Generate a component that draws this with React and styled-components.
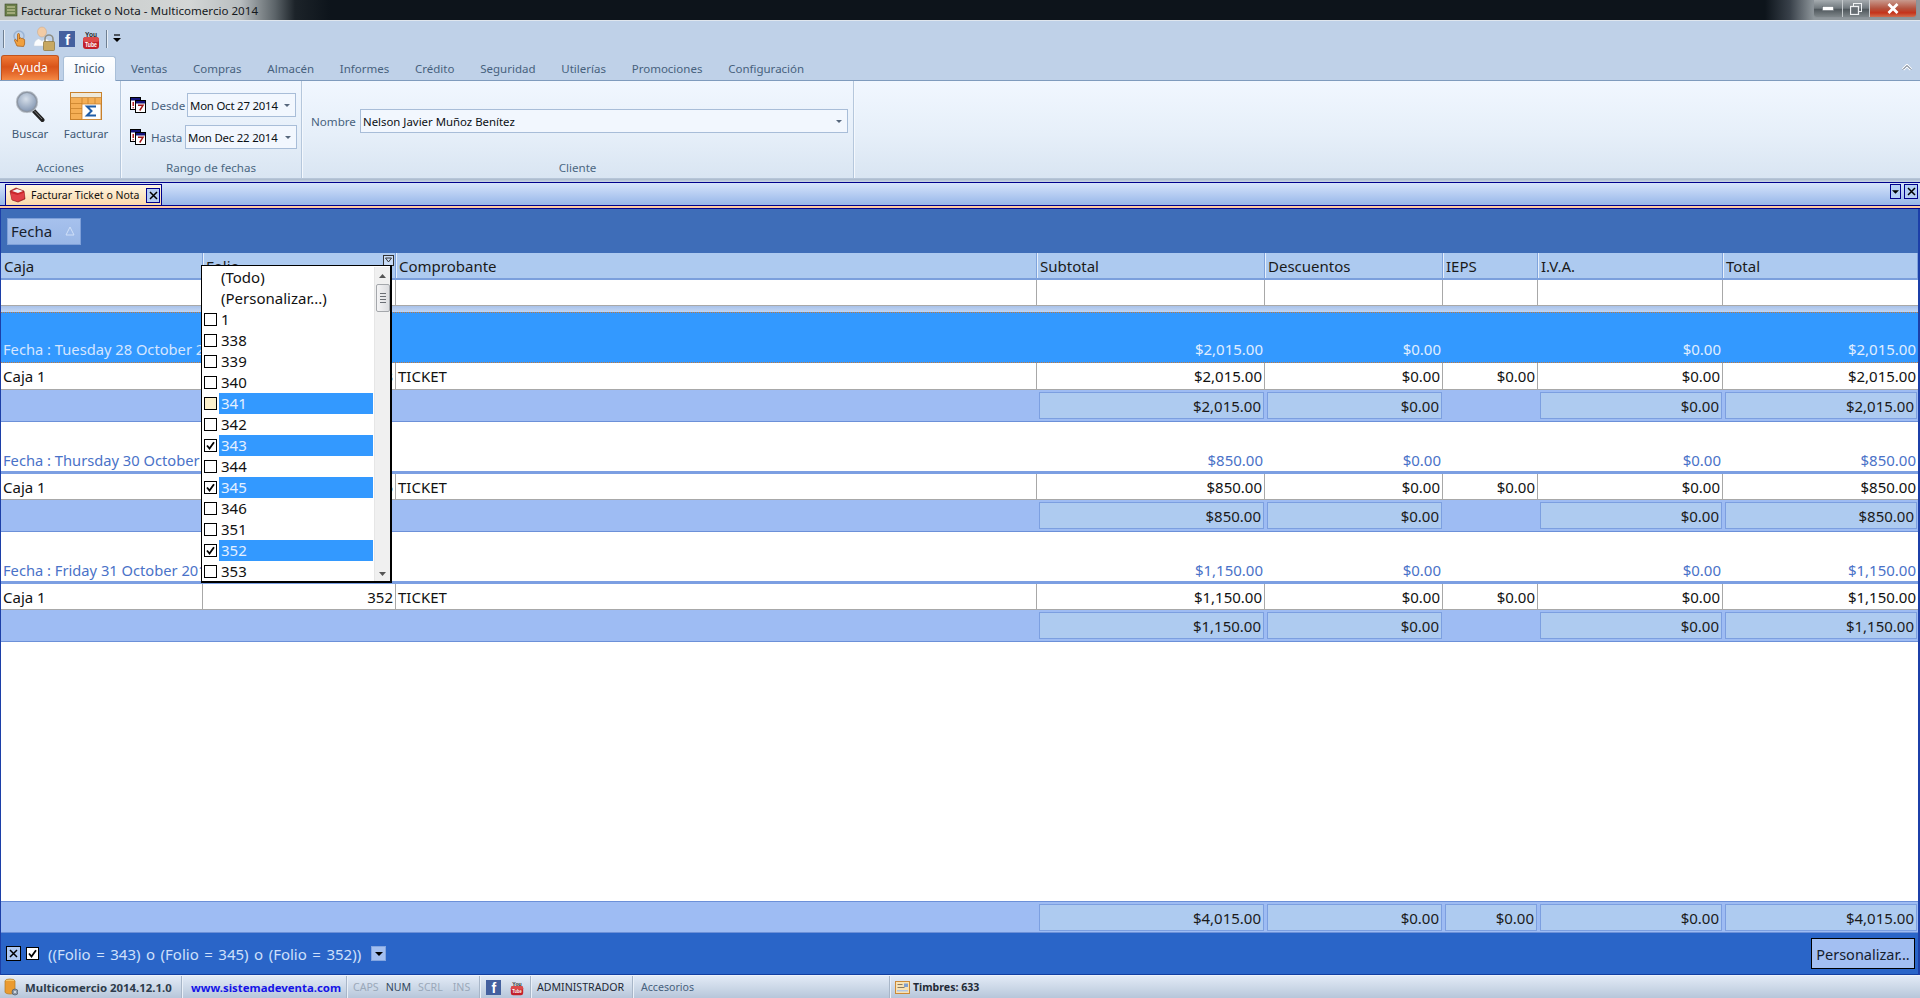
import React from "react";
import styled, { createGlobalStyle } from "styled-components";

const Global = createGlobalStyle`
  html, body { margin: 0; padding: 0; background: #fff; }
  * { box-sizing: border-box; }
  #root { width: 1920px; height: 998px; overflow: hidden; }
`;

const COLS = "202px 193px 641px 228px 178px 95px 185px 195px";
const UI = `"Noto Sans", "Open Sans", sans-serif`;

const Page = styled.div`
  width: 1920px; height: 998px; display: flex; flex-direction: column;
  font-family: ${UI}; overflow: hidden;
`;

/* ---------- title bar ---------- */
const TitleBar = styled.div`
  height: 21px; flex: none; display: flex; align-items: flex-start;
  border-bottom: 1px solid #dfe6ee;
  background: linear-gradient(90deg, #c3c7c6 0, #d3d6d6 190px, #b9bec0 240px, #5c6469 275px, #1c2329 295px, #0d141b 330px, #0d141b 1765px, #39414a 1790px, #8f979c 1814px);
`;
const TitleIcon = styled.svg` width: 14px; height: 16px; margin: 2px 3px 0 4px; flex: none; `;
const TitleText = styled.div`
  font-size: 11.6px; line-height: 21px; color: #15191d; white-space: nowrap;
`;
const WinButtons = styled.div`
  margin-left: auto; margin-right: 3px; height: 18px; display: flex;
  border: 1px solid #8b9298; border-top: none; border-radius: 0 0 4px 4px; overflow: hidden;
`;
const WinBtn = styled.div`
  width: ${p => p.$w}px; height: 100%; display: flex; align-items: center; justify-content: center;
  border-left: ${p => (p.$first ? "none" : "1px solid #c5cacd")};
  background: ${p => (p.$red
    ? "linear-gradient(#c89a8e, #b4533f 50%, #c5331a 75%, #cf6e4e)"
    : "linear-gradient(#a6acb0, #71797e 48%, #50585d 55%, #7f878b)")};
`;

/* ---------- ribbon ---------- */
const RibbonTop = styled.div`
  height: 60px; flex: none; background: #bfd1e8; display: flex; flex-direction: column;
  border-bottom: 1px solid #7f9bbd;
`;
const Qat = styled.div`
  height: 34px; flex: none; display: flex; align-items: center; padding: 1px 0 0 3px;
`;
const QatSep = styled.div`
  width: 1px; height: 18px; background: #6f7f92; border-right: 1px solid #e8eef6; box-sizing: content-box;
  margin: ${p => p.$m};
`;
const QatSlot = styled.div` flex: none; margin-left: ${p => p.$ml}px; display: flex; `;
const Tabs = styled.div`
  height: 25px; display: flex; align-items: flex-end; position: relative;
`;
const AyudaTab = styled.div`
  width: 58px; height: 25px; margin-left: 1px; border-radius: 3px 3px 0 0; color: #fff;
  font-size: 12px; display: flex; align-items: center; justify-content: center; padding-bottom: 1px;
  background: linear-gradient(#f07a36, #d9541a 45%, #e4682a 70%, #f58a45);
  border: 1px solid #c0541e; border-bottom: none;
`;
const ActiveTab = styled.div`
  width: 53px; height: 25px; margin: 0 2px -1px 4px; border-radius: 3px 3px 0 0; color: #3d5670;
  font-size: 12px; display: flex; align-items: center; justify-content: center; padding-bottom: 1px;
  background: linear-gradient(#fff, #f0f6fe); border: 1px solid #a9bfd8; border-bottom: none; z-index: 1;
`;
const Tab = styled.div`
  padding: 2px 12.9px 0; height: 25px; display: flex; align-items: center; color: #47617d;
  font-size: 11.5px; white-space: nowrap;
`;
const Collapse = styled.svg` position: absolute; right: 8px; top: 9px; `;

const RibbonBody = styled.div`
  height: 98px; flex: none; display: flex;
  background: linear-gradient(#f1f7ff, #e6eff9 55%, #d9e5f2);
  border-bottom: 1px solid #b6c5d8;
`;
const Group = styled.div`
  width: ${p => p.$w}px; flex: none; display: flex; flex-direction: column;
  border-right: 1px solid #b5c7dc; box-shadow: 1px 0 0 #f4f8fd;
`;
const GroupBody = styled.div`
  flex: 1; min-height: 0; position: relative; padding: ${p => p.$p || 0};
  display: ${p => p.$flex ? "flex" : "block"};
`;
const GroupLabel = styled.div`
  height: 21px; flex: none; font-size: 11.6px; color: #4b6782; text-align: center; line-height: 21px;
`;
const BigAction = styled.div`
  width: ${p => p.$w}px; display: flex; flex-direction: column; align-items: center; color: #3f5974;
  font-size: 11.4px; line-height: 14px;
`;
const BigIconSlot = styled.div`
  height: 36px; width: 100%; display: flex; align-items: flex-end; justify-content: center; margin-bottom: 5px;
  padding-bottom: ${p => p.$pb || 0}px;
`;
const DateRow = styled.div`
  display: flex; align-items: center; height: 24px; margin-bottom: 8px;
`;
const DateLabel = styled.div`
  font-size: 11.6px; color: #47617d; margin: 0 3px 0 5px; white-space: nowrap; width: ${p => p.$w}px;
`;
const Combo = styled.div`
  width: ${p => p.$w}px; height: 24px; flex: none; border: 1px solid #a8bdd8; background: #f2f7fe;
  display: flex; align-items: center; padding: 0 0 0 2px; font-size: 11.4px; color: #0b1014; white-space: nowrap;
  letter-spacing: ${p => p.$ls || 0}px;
`;
const ComboArrow = styled.span`
  margin-left: auto; margin-right: 5px; width: 0; height: 0;
  border-left: 3px solid transparent; border-right: 3px solid transparent; border-top: 3px solid #56677c;
`;
const NameRow = styled.div`
  display: flex; align-items: center; height: 24px; margin-left: 9px; margin-top: 28px;
`;
const NameLabel = styled.div`
  font-size: 11.6px; color: #47617d; width: 49px; white-space: nowrap;
`;
const RibbonShade = styled.div`
  height: 3px; flex: none; background: linear-gradient(#a9b8ca, #c9d6e6);
`;

/* ---------- MDI tab strip ---------- */
const MdiStrip = styled.div`
  height: 27px; flex: none; display: flex; align-items: flex-end; position: relative;
  border-top: 1px solid #00008b; border-bottom: 1px solid #00008b;
  background: linear-gradient(#fcc9a0, #fcc9a0) bottom / 100% 2px no-repeat,
              linear-gradient(#00008b, #00008b) 0 calc(100% - 2px) / 100% 1px no-repeat,
              linear-gradient(#d6e4fb, #8eb0e6);
  padding: 0 0 3px 5px;
`;
const MdiTab = styled.div`
  width: 157px; height: 21px; display: flex; align-items: center;
  border: 1px solid #00008b; border-bottom: none;
  background: linear-gradient(#fff6e2, #fbd9ab);
  font-size: 10.5px; color: #111; padding-left: 3px; white-space: nowrap;
`;
const MdiTabIconSlot = styled.div` flex: none; margin-right: 5px; display: flex; `;
const MdiBtn = styled.div`
  width: ${p => p.$w || 14}px; height: 15px; border: 1px solid #00008b; background: ${p => p.$bg || "#b6cdf2"};
  display: flex; align-items: center; justify-content: center; flex: none;
  margin-left: ${p => p.$push ? "auto" : 0}; margin-right: ${p => p.$push ? "1px" : 0};
`;
const MdiRight = styled.div`
  margin-left: auto; display: flex; gap: 3px; padding: 0 2px 6px 0;
`;

/* ---------- grid ---------- */
const GridArea = styled.div`
  flex: 1; min-height: 0; display: flex; flex-direction: column; position: relative;
  border-left: 1px solid #1c3fa8; border-right: 2px solid #1c3fa8; font-size: 15px; color: #1a1a1a;
`;
const GroupBand = styled.div`
  height: 44px; flex: none; background: #3e6db8; display: flex; align-items: center; padding-left: 6px;
`;
const BandButton = styled.div`
  width: 74px; height: 27px; background: linear-gradient(#a6c1ed, #9ab7e6); border: 1px solid #7fa0d8;
  display: flex; align-items: center; padding-left: 3px; font-size: 15px; color: #17212e; position: relative;
`;
const BandSort = styled.svg` position: absolute; right: 5px; top: 7px; `;
const Row = styled.div`
  display: grid; grid-template-columns: ${COLS}; flex: none; height: ${p => p.$h}px;
`;
const HeaderRow = styled(Row)`
  background: #adcaf0; border-bottom: 2px solid #7b9fdc;
`;
const HeaderCell = styled.div`
  padding: 2px 0 0 3px; line-height: 22px; position: relative; white-space: nowrap;
  border-right: 1px solid #7fa3dc; box-shadow: inset 1px 0 0 #e6effb;
  &:first-child { box-shadow: none; }
`;
const HeadFilter = styled.svg` position: absolute; right: 1px; top: 2px; `;
const Cell = styled.div`
  border-right: 1px solid #a8a8a8; padding: 1px 2px 0; line-height: 24px; white-space: nowrap; overflow: hidden;
  text-align: ${p => p.$right ? "right" : "left"};
  color: #111;
  &:last-child { border-right: none; }
`;
const WhiteRow = styled(Row)` background: #fff; border-bottom: 1px solid #a8a8a8; `;
const Spacer = styled.div` height: 6px; flex: none; background: linear-gradient(#a8c2ea, #c3d6f2); `;
const GroupHead = styled(Row)`
  align-items: end; background: ${p => p.$active ? "#3399ff" : "#fff"};
  border-top: ${p => p.$active ? "1px dotted #c2783c" : "none"};
  border-bottom: ${p => p.$active ? "1px dotted #c2783c" : "3px solid #7c9fe2"};
  padding-bottom: ${p => p.$active ? 2 : 0}px;
  color: ${p => p.$active ? "#d6e6ff" : "#4a72c8"};
`;
const GroupTitle = styled.div`
  grid-column: 1 / 4; padding-left: 2px; line-height: 22px; white-space: nowrap; font-size: 14.7px;
`;
const GroupAmount = styled.div`
  text-align: right; padding-right: 2px; line-height: 22px;
  color: ${p => p.$active ? "#e0eeff" : "#4a72c8"};
`;
const FootRow = styled(Row)`
  background: #9ebcf3; border-bottom: 1px solid #6c90d8; border-top: 1px solid #a8a8a8; align-items: center;
`;
const FootBox = styled.div`
  height: 27px; background: #aecbf0; border: 1px solid #7c9fe0; margin: 0 1px 0 2px;
  text-align: right; padding: 1px 2px 0 0; line-height: 24px; color: #1a1a1a;
`;
const FootBlank = styled.div``;
const Empty = styled.div` flex: 1; background: #fff; `;
const Summary = styled(Row)`
  background: #9ebcf3; border-top: 1px solid #6c90d8; border-bottom: 1px solid #6c90d8; align-items: center;
`;

/* filter dropdown */
const Dropdown = styled.div`
  position: absolute; left: 200px; top: 56px; width: 191px; height: 318px;
  background: #fff; border: 1px solid #000; border-right-width: 2px; border-bottom-width: 2px;
  display: grid; grid-template-columns: 1fr 16px; overflow: hidden; z-index: 3; padding-top: 1px;
`;
const DropList = styled.div` display: flex; flex-direction: column; `;
const DropItem = styled.div`
  height: 21px; flex: none; display: flex; align-items: center; padding-left: 2px;
`;
const Check = styled.div`
  width: 13px; height: 13px; flex: none; border: 1px solid #000; margin-right: 2px;
  background: ${p => p.$hover ? "#fdf1cc" : "#fff"};
  display: flex; align-items: center; justify-content: center;
`;
const CheckGap = styled.div` width: 15px; flex: none; `;
const DropLabel = styled.div`
  flex: 1; margin-right: 1px; height: 21px; line-height: 20px; padding-left: 2px; font-size: 15px;
  background: ${p => p.$on ? "#3399ff" : "transparent"}; color: ${p => p.$on ? "#e4f0ff" : "#111"};
`;
const ScrollBar = styled.div`
  background: #f0f0f0; display: flex; flex-direction: column; align-items: center; position: relative;
  border-left: 1px solid #e6e6e6;
`;
const ScrollArrow = styled.div`
  height: 17px; display: flex; align-items: center; justify-content: center; flex: none;
  margin-top: ${p => p.$end ? "auto" : 0};
`;
const ScrollThumb = styled.div`
  width: 14px; height: 28px; flex: none; border: 1px solid #a4a7ab; border-radius: 2px;
  background: linear-gradient(90deg, #f4f4f5, #dcdde0); display: flex; flex-direction: column;
  align-items: center; justify-content: center; gap: 2px;
`;
const Grip = styled.div` width: 6px; height: 1px; background: #6a6e74; `;

/* filter bar */
const FilterBar = styled.div`
  height: 42px; flex: none; background: #2a65c8; display: flex; align-items: center; padding: 0 3px 0 5px;
  border-bottom: 1px solid #123fa0;
`;
const FilterClose = styled.div`
  width: 15px; height: 15px; background: #afc9f2; border: 1px solid #000; flex: none;
  display: flex; align-items: center; justify-content: center; margin-right: 5px;
`;
const FilterCheck = styled.div`
  width: 13px; height: 13px; background: #fff; border: 1px solid #000; flex: none;
  display: flex; align-items: center; justify-content: center; margin-right: 9px;
`;
const FilterText = styled.div`
  color: #cfe0fb; font-size: 15px; white-space: nowrap; width: 323px; word-spacing: 1.6px;
`;
const FilterDrop = styled.div`
  width: 15px; height: 15px; background: #a3bff0; border: 1px solid #83a5e0; flex: none;
  display: flex; align-items: center; justify-content: center;
`;
const CustomButton = styled.div`
  margin-left: auto; width: 104px; height: 31px; background: #a3bff2; border: 1px solid #000;
  font-size: 14.5px; color: #14202e; display: flex; align-items: center; justify-content: center; white-space: nowrap;
`;

/* status bar */
const StatusBar = styled.div`
  height: 23px; flex: none; display: flex; align-items: center;
  background: linear-gradient(#e2eaf6, #cdd9e8 50%, #b7c6da); border-top: 1px solid #eef3fa;
  font-size: 10.6px; color: #1f2a36; white-space: nowrap;
`;
const StatusItem = styled.div`
  height: 100%; display: flex; align-items: center; width: ${p => p.$w}px; flex: none; padding-left: ${p => p.$pl || 0}px;
  border-right: ${p => p.$nosep ? "none" : "1px solid #a8b6c8"}; box-shadow: ${p => p.$nosep ? "none" : "1px 0 0 #eaf0f8"};
  font-weight: ${p => p.$bold ? 700 : 400}; color: ${p => p.$color || "inherit"}; gap: ${p => p.$gap || 0}px;
  font-size: ${p => p.$fs || 10.6}px;
`;
const Key = styled.span` color: ${p => p.$on ? "#34495e" : "#9aa8b9"}; margin-right: ${p => p.$mr}px; `;

/* ---------- icons ---------- */
const Cross = ({ s = 9, w = 1.5, c = "#000" }) => (
  <svg width={s} height={s} viewBox="0 0 9 9"><path d="M1 1l7 7M8 1L1 8" stroke={c} strokeWidth={w} fill="none" /></svg>
);
const Tick = ({ s = 9 }) => (
  <svg width={s} height={s} viewBox="0 0 9 9"><path d="M1 4.500l2.500 3L8 1.200" stroke="#000" strokeWidth="1.800" fill="none" /></svg>
);
const DownTri = ({ w = 8, h = 4 }) => (
  <svg width={w} height={h} viewBox="0 0 8 4"><path d="M0 0h8L4 4z" fill="#000" /></svg>
);
const FacebookIcon = ({ w = 16, h = 16 }) => (
  <svg width={w} height={h} viewBox="0 0 16 16">
    <rect width="16" height="16" fill="#44609f" />
    <text x="8.400" y="14" fontFamily="Liberation Sans, sans-serif" fontWeight="700" fontSize="15" fill="#fff" textAnchor="middle">f</text>
  </svg>
);
const YoutubeIcon = ({ w = 18, h = 22 }) => (
  <svg width={w} height={h} viewBox="0 0 18 22">
    <text x="9" y="8.500" fontFamily="Liberation Sans, sans-serif" fontWeight="700" fontSize="8" fill="#2c2c2c" textAnchor="middle" textLength="12" lengthAdjust="spacingAndGlyphs">You</text>
    <rect x="1" y="9" width="16" height="12" rx="3" fill="#c3202a" />
    <rect x="1" y="9" width="16" height="5" rx="2.500" fill="#dc4a4a" />
    <text x="9" y="18.500" fontFamily="Liberation Sans, sans-serif" fontWeight="700" fontSize="8" fill="#fff" textAnchor="middle" textLength="12" lengthAdjust="spacingAndGlyphs">Tube</text>
  </svg>
);
const HandIcon = () => (
  <svg width="14" height="18" viewBox="0 0 14 18">
    <circle cx="6" cy="6" r="5" fill="none" stroke="#9ab3d4" strokeWidth="1.500" />
    <path d="M4 16L1.500 10.500c-.4-1 .9-1.500 1.600-.6L4.500 11.500V4.500c0-1.300 2-1.300 2 0V9l.3-1c.8-.5 1.500-.2 1.700.500.7-.5 1.500-.2 1.600.6.8-.3 1.500.1 1.500 1V14l-1 2.500z" fill="#f0a040" stroke="#a85a10" strokeWidth=".7" />
  </svg>
);
const UserLockIcon = () => (
  <svg width="23" height="26" viewBox="0 0 23 26">
    <ellipse cx="9" cy="6" rx="4.500" ry="5" fill="#f2cba5" stroke="#c9a583" strokeWidth=".5" />
    <path d="M1 20c0-5 3-7 5-7l3 2 3-2c3 0 4 2 5 4l-3 3z" fill="#fbfcfe" stroke="#cfd6de" strokeWidth=".5" />
    <path d="M12 16v-3a4 4 0 0 1 8 0v3" fill="none" stroke="#8f8f86" strokeWidth="1.600" />
    <rect x="10.500" y="15.500" width="11" height="9" rx="1" fill="#c8a860" stroke="#8b7238" strokeWidth=".7" />
  </svg>
);
const Magnifier = () => (
  <svg width="32" height="32" viewBox="0 0 32 32">
    <defs>
      <radialGradient id="gl" cx="45%" cy="35%" r="70%"><stop offset="0" stopColor="#d6dfea" /><stop offset="1" stopColor="#7c90ad" /></radialGradient>
    </defs>
    <path d="M19 20l9.500 10" stroke="#222" strokeWidth="4" strokeLinecap="round" />
    <path d="M20 20.500l8 8.500" stroke="#777" strokeWidth="1" />
    <circle cx="13" cy="12" r="10" fill="url(#gl)" stroke="#8d96a3" strokeWidth="2" />
    <circle cx="13" cy="12" r="10.800" fill="none" stroke="#d8dde3" strokeWidth=".6" />
  </svg>
);
const SumTable = () => (
  <svg width="32" height="28" viewBox="0 0 32 28">
    <rect x=".5" y=".5" width="31" height="27" fill="#f3f0e8" stroke="#c8812c" />
    <rect x="1" y="1" width="30" height="4.500" fill="#efe9da" />
    <rect x="1" y="6" width="11" height="21" fill="#f4ae55" />
    <rect x="12" y="6" width="19" height="6" fill="#f4ae55" />
    <path d="M1 11.500h11M1 16.500h11M1 21.500h11M12 6v6M18 6v6M25 6v6M1 5.500h30" stroke="#c8812c" strokeWidth=".8" />
    <rect x="12" y="12" width="19" height="15.500" fill="#fff" stroke="#c8812c" strokeWidth=".8" />
    <path d="M26 14.500h-9l4.500 4.500-4.500 4.500h9" fill="none" stroke="#1f5da8" strokeWidth="2" />
  </svg>
);
const CalSvg = styled.svg` flex: none; `;
const CalIcon = () => (
  <CalSvg width="16" height="16" viewBox="0 0 16 16">
    <rect x=".5" y=".5" width="10" height="12" fill="#fff" stroke="#000" />
    <rect x="1" y="1" width="9" height="2.500" fill="#14147a" />
    <path d="M3.200 5v4M3.200 10.200v1" stroke="#b00000" strokeWidth="1.300" />
    <rect x="5.500" y="3.500" width="10" height="12" fill="#fff" stroke="#000" />
    <rect x="6" y="4" width="9" height="2.500" fill="#14147a" />
    <path d="M8 8.300h5L9.700 13.500" fill="none" stroke="#a01818" strokeWidth="1.500" />
  </CalSvg>
);
const FolderIcon = () => (
  <svg width="17" height="16" viewBox="0 0 17 16">
    <path d="M1 4l6-3 8 3 1 8-7 3-6-2z" fill="#c9272c" stroke="#7e1518" strokeWidth=".6" />
    <path d="M3 4l5-2 6 2-5 2z" fill="#f4f4f4" />
    <path d="M1.500 6l7 2 7-2.500-.5 6-6.500 2.800L3 12.500z" fill="#e04048" />
  </svg>
);
const AppIcon = () => (
  <svg width="14" height="18" viewBox="0 0 14 18">
    <ellipse cx="6" cy="3" rx="5" ry="2" fill="#f6c566" stroke="#b07820" strokeWidth=".7" />
    <path d="M1 3v11c0 1 2.200 2 5 2s5-1 5-2V3" fill="#eb9b30" stroke="#b07820" strokeWidth=".7" />
    <circle cx="11" cy="14" r="3" fill="#8d99a8" stroke="#4c5866" strokeWidth=".7" />
    <circle cx="11" cy="14" r="1" fill="#e7edf5" />
  </svg>
);
const TimbresIcon = () => (
  <svg width="15" height="13" viewBox="0 0 15 13">
    <rect x=".5" y=".5" width="14" height="12" fill="#f7e2b5" stroke="#cc8a36" />
    <rect x="2.500" y="3" width="5" height="1" fill="#8a7a60" />
    <rect x="2.500" y="6" width="7" height="1" fill="#8a7a60" />
    <rect x="9" y="2.500" width="4" height="3.500" fill="#7f9fd0" />
    <rect x="2" y="9" width="11" height="1.500" fill="#b2c6e6" />
  </svg>
);

const items = [
  { t: "(Todo)", nc: true }, { t: "(Personalizar...)", nc: true },
  { t: "1" }, { t: "338" }, { t: "339" }, { t: "340" },
  { t: "341", on: true, hover: true }, { t: "342" }, { t: "343", on: true, ck: true }, { t: "344" },
  { t: "345", on: true, ck: true }, { t: "346" }, { t: "351" }, { t: "352", on: true, ck: true }, { t: "353" },
];
const headers = ["Caja", "Folio", "Comprobante", "Subtotal", "Descuentos", "IEPS", "I.V.A.", "Total"];
const groups = [
  { title: "Fecha : Tuesday 28 October 2014", folio: "343", amt: "$2,015.00", active: true },
  { title: "Fecha : Thursday 30 October 2014", folio: "345", amt: "$850.00" },
  { title: "Fecha : Friday 31 October 2014", folio: "352", amt: "$1,150.00" },
];
const tabs = ["Ventas", "Compras", "Almacén", "Informes", "Crédito", "Seguridad", "Utilerías", "Promociones", "Configuración"];

const DataGroup = ({ g }) => (
  <>
    <GroupHead $h={g.active ? 51 : 52} $active={g.active}>
      <GroupTitle>{g.title}</GroupTitle>
      <GroupAmount $active={g.active}>{g.amt}</GroupAmount>
      <GroupAmount $active={g.active}>$0.00</GroupAmount>
      <div />
      <GroupAmount $active={g.active}>$0.00</GroupAmount>
      <GroupAmount $active={g.active}>{g.amt}</GroupAmount>
    </GroupHead>
    <Row $h={g.active ? 26 : 25}>
      <Cell>Caja 1</Cell>
      <Cell $right>{g.folio}</Cell>
      <Cell>TICKET</Cell>
      <Cell $right>{g.amt}</Cell>
      <Cell $right>$0.00</Cell>
      <Cell $right>$0.00</Cell>
      <Cell $right>$0.00</Cell>
      <Cell $right>{g.amt}</Cell>
    </Row>
    <FootRow $h={33}>
      <FootBlank /><FootBlank /><FootBlank />
      <FootBox>{g.amt}</FootBox>
      <FootBox>$0.00</FootBox>
      <FootBlank />
      <FootBox>$0.00</FootBox>
      <FootBox>{g.amt}</FootBox>
    </FootRow>
  </>
);

export default function App() {
  return (
    <Page>
      <Global />
      <TitleBar>
        <TitleIcon viewBox="0 0 14 16">
          <rect x="1" y="2" width="12" height="12" fill="#6b7f4a" stroke="#3c4a2a" strokeWidth=".6" />
          <path d="M3 5h8M3 8h8M3 11h8" stroke="#d8d6a8" strokeWidth="1" />
        </TitleIcon>
        <TitleText>Facturar Ticket o Nota - Multicomercio 2014</TitleText>
        <WinButtons>
          <WinBtn $w={28} $first>
            <svg width="12" height="5" viewBox="0 0 12 5"><rect width="11" height="4" x=".5" y=".5" fill="#fff" stroke="#5c646a" strokeWidth=".5" /></svg>
          </WinBtn>
          <WinBtn $w={27}>
            <svg width="12" height="12" viewBox="0 0 12 12"><rect x="3.500" y=".5" width="8" height="8" fill="none" stroke="#eef1f3" /><rect x=".5" y="3.500" width="8" height="8" fill="#656d72" stroke="#eef1f3" strokeWidth="1.300" /></svg>
          </WinBtn>
          <WinBtn $w={47} $red>
            <svg width="12" height="11" viewBox="0 0 12 11"><path d="M1.500 1l9 9M10.500 1l-9 9" stroke="#fff" strokeWidth="2.800" /></svg>
          </WinBtn>
        </WinButtons>
      </TitleBar>

      <RibbonTop>
        <Qat>
          <QatSep $m="0" />
          <QatSlot $ml={8}><HandIcon /></QatSlot>
          <QatSlot $ml={6}><UserLockIcon /></QatSlot>
          <QatSlot $ml={3}><FacebookIcon /></QatSlot>
          <QatSlot $ml={7}><YoutubeIcon /></QatSlot>
          <QatSep $m="0 0 0 6px" />
          <QatSlot $ml={5}>
            <svg width="8" height="9" viewBox="0 0 8 9"><path d="M1 1h6" stroke="#000" strokeWidth="1.200" /><path d="M0 4h8L4 8z" fill="#000" /></svg>
          </QatSlot>
        </Qat>
        <Tabs>
          <AyudaTab>Ayuda</AyudaTab>
          <ActiveTab>Inicio</ActiveTab>
          {tabs.map(t => <Tab key={t}>{t}</Tab>)}
          <Collapse width="10" height="7" viewBox="0 0 10 7"><path d="M1 5.500l4-4 4 4" stroke="#fff" strokeWidth="3" fill="none" /><path d="M1 5.500l4-4 4 4" stroke="#44546a" strokeWidth="1" fill="none" /></Collapse>
        </Tabs>
      </RibbonTop>

      <RibbonBody>
        <Group $w={121}>
          <GroupBody $flex $p="5px 0 0 5px">
            <BigAction $w={50}>
              <BigIconSlot><Magnifier /></BigIconSlot>
              Buscar
            </BigAction>
            <BigAction $w={62}>
              <BigIconSlot $pb={2}><SumTable /></BigIconSlot>
              Facturar
            </BigAction>
          </GroupBody>
          <GroupLabel>Acciones</GroupLabel>
        </Group>
        <Group $w={181}>
          <GroupBody $p="12px 0 0 9px">
            <DateRow>
              <CalIcon />
              <DateLabel $w={33}>Desde</DateLabel>
              <Combo $w={109} $ls={-.2}>Mon Oct 27 2014<ComboArrow /></Combo>
            </DateRow>
            <DateRow>
              <CalIcon />
              <DateLabel $w={31}>Hasta</DateLabel>
              <Combo $w={112} $ls={-.2}>Mon Dec 22 2014<ComboArrow /></Combo>
            </DateRow>
          </GroupBody>
          <GroupLabel>Rango de fechas</GroupLabel>
        </Group>
        <Group $w={552}>
          <GroupBody>
            <NameRow>
              <NameLabel>Nombre</NameLabel>
              <Combo $w={488}>Nelson Javier Muñoz Benítez<ComboArrow /></Combo>
            </NameRow>
          </GroupBody>
          <GroupLabel>Cliente</GroupLabel>
        </Group>
      </RibbonBody>
      <RibbonShade />

      <MdiStrip>
        <MdiTab>
          <MdiTabIconSlot><FolderIcon /></MdiTabIconSlot>
          Facturar Ticket o Nota
          <MdiBtn $push><Cross /></MdiBtn>
        </MdiTab>
        <MdiRight>
          <MdiBtn $w={11} $bg="#b6cff5"><DownTri w={7} h={4} /></MdiBtn>
          <MdiBtn $bg="#b6cff5"><Cross /></MdiBtn>
        </MdiRight>
      </MdiStrip>

      <GridArea>
        <GroupBand>
          <BandButton>
            Fecha
            <BandSort width="10" height="10" viewBox="0 0 10 10"><path d="M5 1l4 8H1z" fill="none" stroke="#d0e0f8" strokeWidth="1" /></BandSort>
          </BandButton>
        </GroupBand>
        <HeaderRow $h={27}>
          {headers.map(h => (
            <HeaderCell key={h}>
              {h}
              {h === "Folio" && (
                <HeadFilter width="11" height="11" viewBox="0 0 11 11">
                  <rect x=".5" y=".5" width="10" height="10" fill="#c9dcf6" stroke="#333" />
                  <path d="M2.500 3h6L5.500 7z" fill="none" stroke="#333" />
                </HeadFilter>
              )}
            </HeaderCell>
          ))}
        </HeaderRow>
        <WhiteRow $h={26}>
          {headers.map(h => <Cell key={h} />)}
        </WhiteRow>
        <Spacer />
        {groups.map(g => <DataGroup key={g.folio} g={g} />)}
        <Empty />
        <Summary $h={32}>
          <FootBlank /><FootBlank /><FootBlank />
          <FootBox>$4,015.00</FootBox>
          <FootBox>$0.00</FootBox>
          <FootBox>$0.00</FootBox>
          <FootBox>$0.00</FootBox>
          <FootBox>$4,015.00</FootBox>
        </Summary>
        <FilterBar>
          <FilterClose><Cross /></FilterClose>
          <FilterCheck><Tick /></FilterCheck>
          <FilterText>((Folio = 343) o (Folio = 345) o (Folio = 352))</FilterText>
          <FilterDrop><DownTri /></FilterDrop>
          <CustomButton>Personalizar...</CustomButton>
        </FilterBar>

        <Dropdown>
          <DropList>
            {items.map(it => (
              <DropItem key={it.t}>
                {it.nc ? <CheckGap /> : <Check $hover={it.hover}>{it.ck && <Tick />}</Check>}
                <DropLabel $on={it.on}>{it.t}</DropLabel>
              </DropItem>
            ))}
          </DropList>
          <ScrollBar>
            <ScrollArrow><svg width="7" height="4" viewBox="0 0 7 4"><path d="M3.500 0L7 4H0z" fill="#555" /></svg></ScrollArrow>
            <ScrollThumb><Grip /><Grip /><Grip /><Grip /></ScrollThumb>
            <ScrollArrow $end><svg width="7" height="4" viewBox="0 0 7 4"><path d="M0 0h7L3.500 4z" fill="#555" /></svg></ScrollArrow>
          </ScrollBar>
        </Dropdown>
      </GridArea>

      <StatusBar>
        <StatusItem $w={182} $pl={4} $gap={7} $bold $color="#2d3b4b" $fs={11.4}>
          <AppIcon />Multicomercio 2014.12.1.0
        </StatusItem>
        <StatusItem $w={165} $pl={9} $bold $color="#1414e6" $fs={11.4}>www.sistemadeventa.com</StatusItem>
        <StatusItem $w={133} $pl={6}>
          <Key $mr={7}>CAPS</Key><Key $on $mr={7}>NUM</Key><Key $mr={10}>SCRL</Key><Key $mr={0}>INS</Key>
        </StatusItem>
        <StatusItem $w={51} $pl={6} $gap={9}>
          <FacebookIcon w={15} h={17} /><YoutubeIcon w={14} h={17} />
        </StatusItem>
        <StatusItem $w={102} $pl={6}>ADMINISTRADOR</StatusItem>
        <StatusItem $w={257} $pl={8} $color="#47617d">Accesorios</StatusItem>
        <StatusItem $w={200} $pl={5} $gap={3} $bold $nosep><TimbresIcon />Timbres: 633</StatusItem>
      </StatusBar>
    </Page>
  );
}
